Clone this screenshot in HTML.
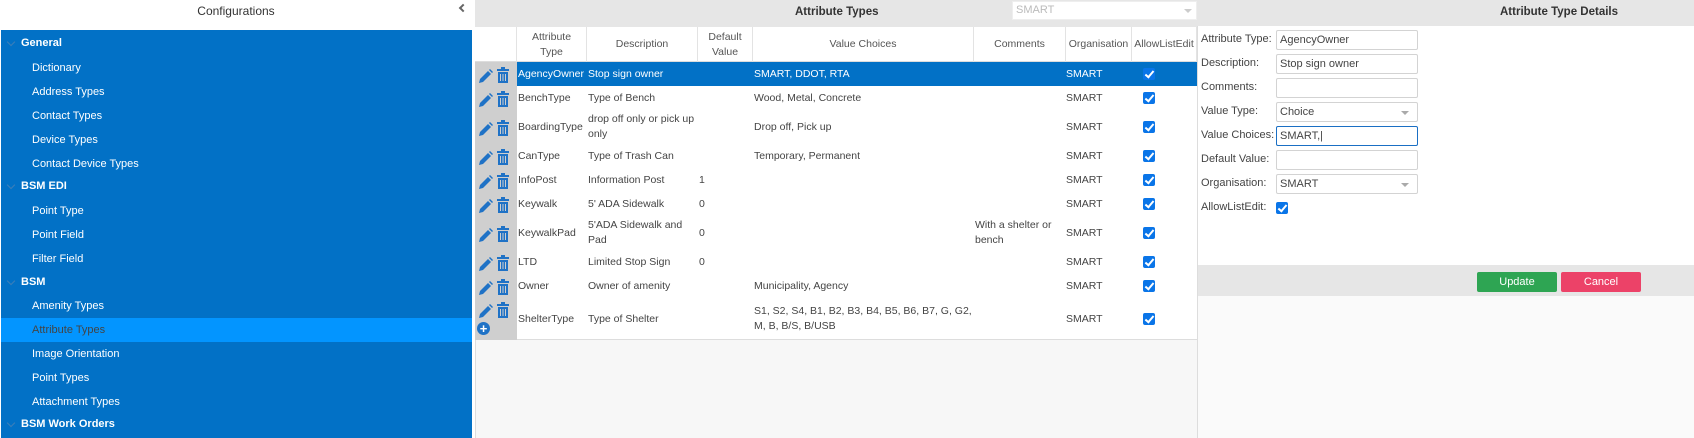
<!DOCTYPE html>
<html><head><meta charset="utf-8"><style>
*{margin:0;padding:0;box-sizing:border-box}
body{width:1694px;height:438px;position:relative;overflow:hidden;background:#fff;font-family:"Liberation Sans","DejaVu Sans",sans-serif;font-size:11px;color:#444}
.a{position:absolute}
.nav{position:absolute;left:1px;width:471px;height:24px;line-height:24px;color:#fff;font-size:11px}
.h{font-weight:bold;padding-left:20px}
.c{padding-left:31px}
.chev{position:absolute;left:7px;top:8px;width:6px;height:6px;border-right:1.5px solid #3d7fb8;border-bottom:1.5px solid #3d7fb8;transform:rotate(45deg)}
.th{position:absolute;top:27px;height:35px;border-right:1px solid #e3e3e3;display:flex;align-items:center;justify-content:center;text-align:center;line-height:15px;color:#555;font-size:10.5px}
.cell{position:absolute;display:flex;align-items:center;line-height:15px;font-size:10.5px;white-space:normal}
.cb{position:absolute;width:12px;height:12px;background:#0a75e8;border-radius:2px}
.cb:after{content:"";position:absolute;left:4px;top:1px;width:3px;height:7px;border-right:2px solid #fff;border-bottom:2px solid #fff;transform:rotate(40deg)}
.lbl{position:absolute;left:1201px;font-size:11px;color:#444}
.inp{position:absolute;left:1276px;width:142px;height:20px;border:1px solid #d3d3d3;border-radius:2px;padding-left:3px;line-height:18px;font-size:11px;color:#444;background:#fff}
.dd:after{content:"";position:absolute;right:8px;top:8px;border-left:4px solid transparent;border-right:4px solid transparent;border-top:4px solid #aaa}
</style></head><body>
<!-- left panel -->
<div class="a" style="left:0;top:0;width:472px;height:30px;text-align:center;line-height:22px;font-size:12px;color:#333">Configurations</div>
<div class="a" style="left:460px;top:5px;width:6px;height:6px;border-left:2px solid #666;border-bottom:2px solid #666;transform:rotate(45deg)"></div>
<div class="a" style="left:1px;top:30px;width:471px;height:408px;background:#0271c6"></div>
<div class="a" style="left:472px;top:0;width:3px;height:438px;background:#fff"></div>
<div class="a" style="left:1px;top:318px;width:471px;height:24px;background:#0395ff"></div>
<div class="nav h" style="top:31px"><span class="chev"></span>General</div>
<div class="nav c" style="top:56px">Dictionary</div>
<div class="nav c" style="top:80px">Address Types</div>
<div class="nav c" style="top:104px">Contact Types</div>
<div class="nav c" style="top:128px">Device Types</div>
<div class="nav c" style="top:152px">Contact Device Types</div>
<div class="nav h" style="top:174px"><span class="chev"></span>BSM EDI</div>
<div class="nav c" style="top:199px">Point Type</div>
<div class="nav c" style="top:223px">Point Field</div>
<div class="nav c" style="top:247px">Filter Field</div>
<div class="nav h" style="top:270px"><span class="chev"></span>BSM</div>
<div class="nav c" style="top:294px">Amenity Types</div>
<div class="nav c" style="top:318px;color:#444">Attribute Types</div>
<div class="nav c" style="top:342px">Image Orientation</div>
<div class="nav c" style="top:366px">Point Types</div>
<div class="nav c" style="top:390px">Attachment Types</div>
<div class="nav h" style="top:412px"><span class="chev"></span>BSM Work Orders</div>

<!-- center panel -->
<div class="a" style="left:475px;top:0;width:722px;height:438px;background:#f7f7f7;border-left:1px solid #ddd"></div>
<div class="a" style="left:475px;top:0;width:722px;height:27px;background:#e6e6e6"></div>
<div class="a" style="left:795px;top:0;height:27px;line-height:24px;font-weight:bold;font-size:11.5px;color:#333">Attribute Types</div>
<div class="a" style="left:1012px;top:1px;width:185px;height:19px;background:#fff;border:1px solid #eee;color:#bbb;padding-left:3px;line-height:17px">SMART</div>
<div class="a" style="left:1184px;top:9px;border-left:4px solid transparent;border-right:4px solid transparent;border-top:4px solid #ccc"></div>
<div class="a" style="left:475px;top:27px;width:722px;height:313px;background:#fff;border-bottom:1px solid #ddd"></div>
<div class="a" style="left:475px;top:62px;width:42px;height:278px;background:#cfcfcf"></div>
<div class="a" style="left:517px;top:62px;width:680px;height:24px;background:#0271c6"></div>
<div class="a" style="left:475px;top:61px;width:722px;height:1px;background:#ddd"></div>
<div class="th" style="left:475px;width:42px"></div>
<div class="th" style="left:517px;width:70px">Attribute<br>Type</div>
<div class="th" style="left:587px;width:111px">Description</div>
<div class="th" style="left:698px;width:55px">Default<br>Value</div>
<div class="th" style="left:753px;width:221px">Value Choices</div>
<div class="th" style="left:974px;width:92px">Comments</div>
<div class="th" style="left:1066px;width:66px">Organisation</div>
<div class="th" style="left:1132px;width:65px">AllowListEdit</div>

<svg width="0" height="0" style="position:absolute"><defs>
<g id="ic"><path d="M1 14 L2 10 L10 2 L13 5 L5 13 Z" fill="#1f72c6"/><path d="M11 1 L12 0 L15 3 L14 4 Z" fill="#1f72c6"/>
<rect x="19" y="0" width="12" height="2" fill="#1f72c6"/><rect x="23" y="-2" width="4" height="2" fill="#1f72c6"/>
<path d="M20 3 H30 V14 H20 Z" fill="#1f72c6"/><path d="M22.5 5 V12 M25 5 V12 M27.5 5 V12" stroke="#cfcfcf" stroke-width="1"/></g></defs></svg>

<div id="rows"></div>
<script>
var R=[[62,24,"AgencyOwner","Stop sign owner","","SMART, DDOT, RTA","",1],
[86,24,"BenchType","Type of Bench","","Wood, Metal, Concrete",""],
[110,34,"BoardingType","drop off only or pick up only","","Drop off, Pick up",""],
[144,24,"CanType","Type of Trash Can","","Temporary, Permanent",""],
[168,24,"InfoPost","Information Post","1","",""],
[192,24,"Keywalk","5' ADA Sidewalk","0","",""],
[216,34,"KeywalkPad","5'ADA Sidewalk and Pad","0","","With a shelter or bench"],
[250,24,"LTD","Limited Stop Sign","0","",""],
[274,24,"Owner","Owner of amenity","","Municipality, Agency",""],
[298,42,"ShelterType","Type of Shelter","","S1, S2, S4, B1, B2, B3, B4, B5, B6, B7, G, G2, M, B, B/S, B/USB",""]];
var h="",cols=[[517,70,2],[587,111,3],[698,55,4],[753,221,5],[974,92,6]];
R.forEach(function(r,i){var s=r[7]?"color:#fff;":"";
var iy=r[0]+(i==9?4:Math.round(r[1]/2)-7);
h+='<svg class="a" style="left:478px;top:'+iy+'px;overflow:visible" width="32" height="16"><use href="#ic" y="2"/></svg>';
cols.forEach(function(c){h+='<div class="cell" style="left:'+(c[0]+1)+'px;top:'+r[0]+'px;width:'+(c[1]-2)+'px;height:'+r[1]+'px;'+s+'">'+r[c[2]]+'</div>';});
h+='<div class="cell" style="left:1066px;top:'+r[0]+'px;height:'+r[1]+'px;'+s+'">SMART</div>';
h+='<div class="cb" style="left:1143px;top:'+(r[0]+Math.round(r[1]/2)-6)+'px"></div>';});
h+='<div class="a" style="left:477px;top:322px;width:13px;height:13px;border-radius:50%;background:#1f72c6;color:#fff;font-weight:bold;font-size:13px;line-height:13px;text-align:center">+</div>';
document.getElementById("rows").innerHTML=h;
</script>

<!-- right panel -->
<div class="a" style="left:1197px;top:0;width:497px;height:438px;background:#fff;border-left:1px solid #ddd"></div>
<div class="a" style="left:1197px;top:0;width:497px;height:26px;background:#e6e6e6"></div>
<div class="a" style="left:1500px;top:0;width:118px;height:26px;line-height:24px;font-weight:bold;font-size:11.5px;color:#333;text-align:center">Attribute Type Details</div>
<div class="lbl" style="top:33px">Attribute Type:</div><div class="inp" style="top:30px">AgencyOwner</div>
<div class="lbl" style="top:57px">Description:</div><div class="inp" style="top:54px">Stop sign owner</div>
<div class="lbl" style="top:81px">Comments:</div><div class="inp" style="top:78px"></div>
<div class="lbl" style="top:105px">Value Type:</div><div class="inp dd" style="top:102px">Choice</div>
<div class="lbl" style="top:129px">Value Choices:</div><div class="inp" style="top:126px;border-color:#1a6fc4">SMART,|</div>
<div class="lbl" style="top:153px">Default Value:</div><div class="inp" style="top:150px"></div>
<div class="lbl" style="top:177px">Organisation:</div><div class="inp dd" style="top:174px">SMART</div>
<div class="lbl" style="top:201px">AllowListEdit:</div><div class="cb" style="left:1276px;top:202px"></div>
<div class="a" style="left:1198px;top:265px;width:496px;height:31px;background:#e6e6e6"></div>
<div class="a" style="left:1477px;top:272px;width:80px;height:20px;background:#2ea553;border-radius:2px;color:#fff;text-align:center;line-height:20px">Update</div>
<div class="a" style="left:1561px;top:272px;width:80px;height:20px;background:#ec4268;border-radius:2px;color:#fff;text-align:center;line-height:20px">Cancel</div>
<div class="a" style="left:1198px;top:296px;width:496px;height:142px;background:#fafafa"></div>
</body></html>
